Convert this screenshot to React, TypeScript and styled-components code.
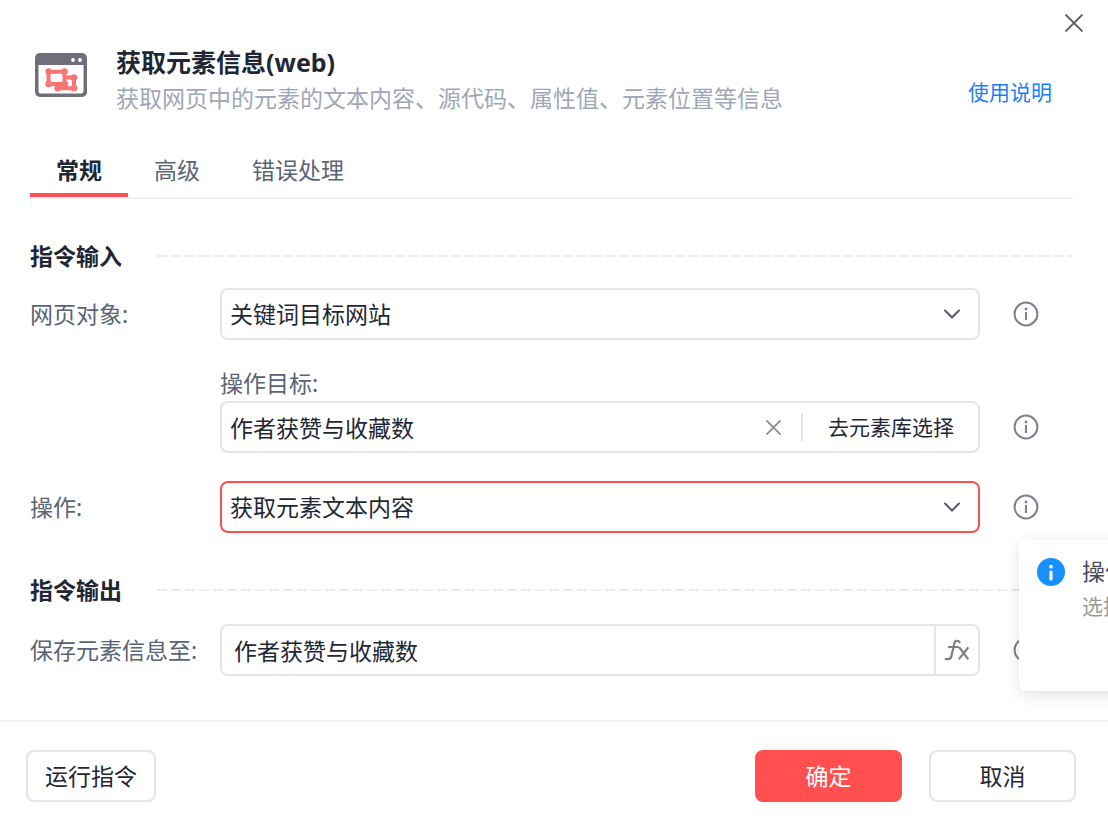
import React from "react";
import styled, { createGlobalStyle } from "styled-components";

const GlobalStyle = createGlobalStyle`
  * { box-sizing: border-box; }
  body {
    margin: 0;
    background: #fff;
    color: #1f2735;
    font-family: "Noto Sans", "Noto Sans CJK SC", sans-serif;
    font-size: 23px;
    line-height: 32px;
  }
  button, input, select { font: inherit; color: inherit; margin: 0; }
  h1, h2, p { margin: 0; }
`;

const Dialog = styled.div`
  position: relative;
  min-height: 100vh;
  overflow: hidden;
  display: flex;
  flex-direction: column;
`;

const IconButton = styled.button`
  display: flex;
  align-items: center;
  justify-content: center;
  padding: 0;
  border: 0;
  background: none;
  cursor: pointer;
`;

const CloseButton = styled(IconButton)`
  position: absolute;
  top: 11px;
  right: 22px;
  width: 24px;
  height: 24px;
`;

const Header = styled.header`
  display: flex;
  align-items: flex-start;
  padding: 44px 56px 0 35px;
`;

const CommandIcon = styled.svg`
  flex: none;
  margin: 9px 29px 0 0;
`;

const Titles = styled.div`
  flex: 1;
  min-width: 0;
`;

const Title = styled.h1`
  font-size: 25px;
  line-height: 36px;
  font-weight: 700;
`;

const Description = styled.p`
  line-height: 36px;
  color: #9fa6b7;
`;

const HelpLink = styled.a`
  margin-top: 32px;
  font-size: 21px;
  color: #1a7ffa;
  text-decoration: none;
`;

const Tabs = styled.div`
  display: flex;
  margin: 31px 35px 0 30px;
  border-bottom: 2px solid #efeff4;
`;

const Tab = styled.button<{ $active?: boolean }>`
  height: 50px;
  padding: 0 26px;
  border: 0;
  border-bottom: 4px solid ${(p) => (p.$active ? "#ff4f4f" : "transparent")};
  background: none;
  color: ${(p) => (p.$active ? "#1f2735" : "#5a6474")};
  font-weight: ${(p) => (p.$active ? 700 : 400)};
  cursor: pointer;
`;

const Body = styled.main`
  flex: 1;
  padding: 41px 35px 44px 30px;
`;

const SectionHeading = styled.div`
  display: flex;
  align-items: center;
  gap: 35px;
  margin-bottom: 16px;
`;

const OutputHeading = styled(SectionHeading)`
  margin: 41px 0 18px;
`;

const SectionTitle = styled.h2`
  font-size: 23px;
  line-height: 32px;
  font-weight: 700;
`;

const DashedRule = styled.div`
  flex: 1;
  height: 2px;
  background: repeating-linear-gradient(90deg, #ececf0 0 10px, transparent 10px 14px);
`;

const Row = styled.div`
  position: relative;
  display: flex;
  align-items: center;
  padding-right: 34px;
`;

const Label = styled.label`
  flex: none;
  width: 190px;
  color: #5a6474;
`;

const TargetGroup = styled.div`
  margin: 27px 0 28px;
`;

const TargetLabel = styled.label`
  display: block;
  margin: 0 0 2px 190px;
  color: #5a6474;
`;

const Indent = styled.div`
  flex: none;
  width: 190px;
`;

const Field = styled.div<{ $active?: boolean }>`
  position: relative;
  flex: 1;
  min-width: 0;
  height: 52px;
  display: flex;
  align-items: center;
  border: 2px solid ${(p) => (p.$active ? "#fc5050" : "#e4e4ea")};
  border-radius: 8px;
`;

const Select = styled.select`
  appearance: none;
  width: 100%;
  height: 100%;
  padding: 0 48px 0 8px;
  border: 0;
  outline: 0;
  background: none;
`;

const Chevron = styled.svg`
  position: absolute;
  right: 17px;
  pointer-events: none;
`;

const TextInput = styled.input<{ $inset: number }>`
  flex: 1;
  min-width: 0;
  height: 100%;
  padding: 0 0 0 ${(p) => p.$inset}px;
  border: 0;
  outline: 0;
  background: none;
`;

const ClearButton = styled(IconButton)`
  width: 24px;
  height: 24px;
  margin-right: 16px;
`;

const Divider = styled.div`
  width: 2px;
  height: 28px;
  background: #e4e4ea;
`;

const LibraryButton = styled.button`
  padding: 0 24px 0 25px;
  border: 0;
  background: none;
  font-size: 21px;
  cursor: pointer;
`;

const FxButton = styled(IconButton)`
  width: 44px;
  height: 100%;
  border-left: 2px solid #e4e4ea;
`;

const InfoButton = styled(IconButton)`
  flex: none;
  width: 26px;
  height: 26px;
  margin: 0 0 0 33px;
`;

const Tooltip = styled.div`
  position: absolute;
  z-index: 1;
  top: 59px;
  left: calc(100% - 54px);
  width: 360px;
  height: 151px;
  display: flex;
  gap: 17px;
  padding: 15px 18px;
  border-radius: 8px;
  background: #fff;
  box-shadow: 0 4px 16px rgba(0, 0, 0, 0.12);
`;

const TooltipIcon = styled.svg`
  flex: none;
  margin-top: 3px;
`;

const TooltipTitle = styled.p`
  color: #474d57;
`;

const TooltipText = styled.p`
  margin-top: 3px;
  font-size: 21px;
  color: #999;
`;

const Footer = styled.footer`
  display: flex;
  gap: 27px;
  padding: 28px 32px 23px 26px;
  border-top: 2px solid #efeff4;
`;

const Button = styled.button<{ $primary?: boolean; $wide?: boolean; $first?: boolean }>`
  width: ${(p) => (p.$wide ? 147 : 130)}px;
  height: 52px;
  margin-right: ${(p) => (p.$first ? "auto" : "0")};
  padding: 0;
  border: 2px solid ${(p) => (p.$primary ? "#ff4f4f" : "#e4e4ea")};
  border-radius: 8px;
  background: ${(p) => (p.$primary ? "#ff4f4f" : "#fff")};
  color: ${(p) => (p.$primary ? "#fff" : "#1f2735")};
  cursor: pointer;
`;

const Cross = ({ size, color }: { size: number; color: string }) => (
  <svg width={size} height={size} viewBox="0 0 16 16" fill="none" stroke={color} strokeWidth="1.8" strokeLinecap="round">
    <path d="M1 1 15 15M15 1 1 15" />
  </svg>
);

const ChevronDown = () => (
  <Chevron width="18" height="12" viewBox="0 0 18 12" fill="none" stroke="#4e5867" strokeWidth="2" strokeLinecap="round" strokeLinejoin="round">
    <path d="M2 2.5 9 9.5 16 2.5" />
  </Chevron>
);

const FunctionIcon = () => (
  <svg width="26" height="22" viewBox="0 0 26 22" fill="none" stroke="#808080" strokeWidth="2.2" strokeLinecap="round">
    <path d="M15.5 3.2C14.6 1.4 11 1.2 10.3 4.5L7.4 17.2C6.9 19.6 4.6 20.6 1.6 20" />
    <path d="M4.8 8H14" />
    <path d="M15.8 9 23.8 19.6M23.8 9 15.4 19.6" />
  </svg>
);

const Info = ({ name }: { name: string }) => (
  <InfoButton type="button" aria-label={name}>
    <svg width="26" height="26" viewBox="0 0 26 26" fill="none">
      <circle cx="13" cy="13" r="11.4" stroke="#7b808a" strokeWidth="2" />
      <circle cx="13" cy="8" r="1.4" fill="#7b808a" />
      <path d="M13 11v8" stroke="#7b808a" strokeWidth="2" />
    </svg>
  </InfoButton>
);

const WebElementIcon = () => (
  <CommandIcon width="52" height="44" viewBox="0 0 52 44" fill="none">
    <path d="M5 0H47a5 5 0 0 1 5 5V39a5 5 0 0 1-5 5H5a5 5 0 0 1-5-5V5a5 5 0 0 1 5-5Z" fill="#706e79" />
    <path d="M3.5 12H48.5V38.5a2 2 0 0 1-2 2H5.5a2 2 0 0 1-2-2Z" fill="#fff" />
    <circle cx="38" cy="7" r="1.9" fill="#fff" />
    <circle cx="45" cy="7" r="1.9" fill="#fff" />
    <g stroke="#fc7474" strokeWidth="4">
      <path d="M13.5 18.8H29.5V31H13.5Z" />
      <path d="M31 24.5H39V35.2H22.5V31" />
    </g>
    <g fill="#fc7474">
      <circle cx="13.7" cy="18.5" r="3.3" />
      <circle cx="29.6" cy="18.5" r="3.3" />
      <circle cx="13.7" cy="31" r="3.3" />
      <circle cx="30" cy="31" r="3.3" />
      <circle cx="39" cy="24.5" r="3.3" />
      <circle cx="22.7" cy="35.2" r="3.3" />
      <circle cx="39" cy="35.2" r="3.3" />
    </g>
  </CommandIcon>
);

export default function App() {
  return (
    <>
      <GlobalStyle />
      <Dialog role="dialog" aria-labelledby="dialog-title">
        <CloseButton type="button" aria-label="关闭">
          <Cross size={18} color="#5c5f62" />
        </CloseButton>
        <Header>
          <WebElementIcon />
          <Titles>
            <Title id="dialog-title">获取元素信息(web)</Title>
            <Description>获取网页中的元素的文本内容、源代码、属性值、元素位置等信息</Description>
          </Titles>
          <HelpLink href="#help">使用说明</HelpLink>
        </Header>
        <Tabs role="tablist">
          <Tab type="button" role="tab" aria-selected="true" $active>常规</Tab>
          <Tab type="button" role="tab" aria-selected="false">高级</Tab>
          <Tab type="button" role="tab" aria-selected="false">错误处理</Tab>
        </Tabs>
        <Body>
          <SectionHeading>
            <SectionTitle>指令输入</SectionTitle>
            <DashedRule />
          </SectionHeading>
          <Row>
            <Label htmlFor="page">网页对象:</Label>
            <Field>
              <Select id="page" defaultValue="site">
                <option value="site">关键词目标网站</option>
              </Select>
              <ChevronDown />
            </Field>
            <Info name="网页对象" />
          </Row>
          <TargetGroup>
            <TargetLabel htmlFor="target">操作目标:</TargetLabel>
            <Row>
              <Indent />
              <Field>
                <TextInput id="target" type="text" defaultValue="作者获赞与收藏数" $inset={8} />
                <ClearButton type="button" aria-label="清除">
                  <Cross size={15} color="#8b8b8b" />
                </ClearButton>
                <Divider />
                <LibraryButton type="button">去元素库选择</LibraryButton>
              </Field>
              <Info name="操作目标" />
            </Row>
          </TargetGroup>
          <Row>
            <Label htmlFor="action">操作:</Label>
            <Field $active>
              <Select id="action" defaultValue="text">
                <option value="text">获取元素文本内容</option>
              </Select>
              <ChevronDown />
            </Field>
            <Info name="操作" />
            <Tooltip role="tooltip">
              <TooltipIcon width="28" height="28" viewBox="0 0 28 28">
                <circle cx="14" cy="14" r="14" fill="#1890ff" />
                <circle cx="14" cy="8.6" r="1.9" fill="#fff" />
                <path d="M14 14v7" stroke="#fff" strokeWidth="3.2" strokeLinecap="round" />
              </TooltipIcon>
              <div>
                <TooltipTitle>操作</TooltipTitle>
                <TooltipText>选择</TooltipText>
              </div>
            </Tooltip>
          </Row>
          <OutputHeading>
            <SectionTitle>指令输出</SectionTitle>
            <DashedRule />
          </OutputHeading>
          <Row>
            <Label htmlFor="output">保存元素信息至:</Label>
            <Field>
              <TextInput id="output" type="text" defaultValue="作者获赞与收藏数" $inset={12} />
              <FxButton type="button" aria-label="表达式">
                <FunctionIcon />
              </FxButton>
            </Field>
            <Info name="保存元素信息至" />
          </Row>
        </Body>
        <Footer>
          <Button type="button" $first>运行指令</Button>
          <Button type="button" $primary $wide>确定</Button>
          <Button type="button" $wide>取消</Button>
        </Footer>
      </Dialog>
    </>
  );
}
